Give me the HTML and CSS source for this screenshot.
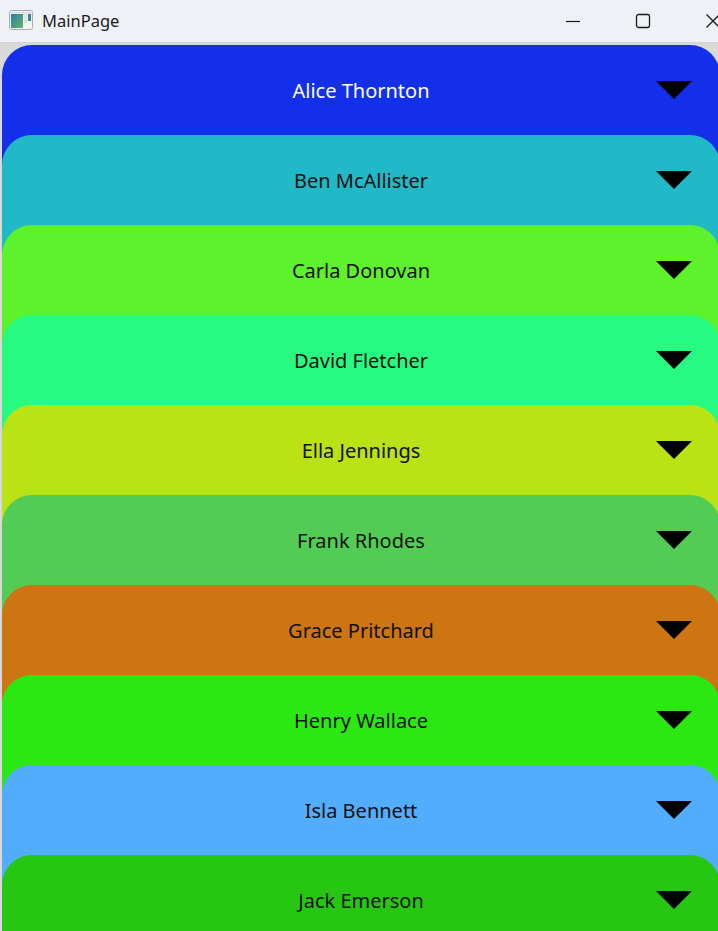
FILE: index.html
```html
<!DOCTYPE html>
<html>
<head>
<meta charset="utf-8">
<link rel="stylesheet" href="styles.css">
</head>
<body>
<div class="window">
  <div class="titlebar">
    <div class="app">
      <svg class="app-icon" width="24" height="20" viewBox="0 0 24 20">
        <defs>
          <linearGradient id="g" x1="0" y1="0" x2="1" y2="1">
            <stop offset="0" stop-color="#2a7fa0"/>
            <stop offset="1" stop-color="#63b36a"/>
          </linearGradient>
        </defs>
        <rect x="0.5" y="0.5" width="23" height="19" rx="2" fill="#f4f4f4" stroke="#a9a9a9"/>
        <rect x="2" y="4" width="12" height="14" fill="url(#g)"/>
        <rect x="15" y="4" width="3" height="9" fill="#e2e2e2"/>
        <rect x="19" y="4" width="3" height="7" fill="#2c8c9c"/>
        <rect x="2" y="2" width="20" height="1.5" fill="#dcdcdc"/>
      </svg>
      <span class="title">MainPage</span>
    </div>
    <div class="controls">
      <div class="ctl"><svg width="16" height="16" viewBox="0 0 16 16"><line x1="1" y1="8.5" x2="15" y2="8.5" stroke="#1a1a1a" stroke-width="1.2"/></svg></div>
      <div class="ctl"><svg width="16" height="16" viewBox="0 0 16 16"><rect x="1.5" y="1.5" width="13" height="13" rx="2" fill="none" stroke="#1a1a1a" stroke-width="1.3"/></svg></div>
      <div class="ctl"><svg width="16" height="16" viewBox="0 0 16 16"><path d="M1.5 1.5 L14.5 14.5 M14.5 1.5 L1.5 14.5" stroke="#1a1a1a" stroke-width="1.3"/></svg></div>
    </div>
  </div>
  <div class="content">
    <div class="card c1 light"><div class="row"><span class="name">Alice Thornton</span><span class="tri"></span></div></div>
    <div class="card c2"><div class="row"><span class="name">Ben McAllister</span><span class="tri"></span></div></div>
    <div class="card c3"><div class="row"><span class="name">Carla Donovan</span><span class="tri"></span></div></div>
    <div class="card c4"><div class="row"><span class="name">David Fletcher</span><span class="tri"></span></div></div>
    <div class="card c5"><div class="row"><span class="name">Ella Jennings</span><span class="tri"></span></div></div>
    <div class="card c6"><div class="row"><span class="name">Frank Rhodes</span><span class="tri"></span></div></div>
    <div class="card c7"><div class="row"><span class="name">Grace Pritchard</span><span class="tri"></span></div></div>
    <div class="card c8"><div class="row"><span class="name">Henry Wallace</span><span class="tri"></span></div></div>
    <div class="card c9"><div class="row"><span class="name">Isla Bennett</span><span class="tri"></span></div></div>
    <div class="card c10"><div class="row"><span class="name">Jack Emerson</span><span class="tri"></span></div></div>
  </div>
</div>
</body>
</html>
```
FILE: styles.css
```css
html, body {
  margin: 0;
  padding: 0;
  overflow: hidden;
  height: 931px;
  background: #d9d9d9;
}
.window {
  width: 748px;
  font-family: "Noto Sans", "Open Sans", sans-serif;
}
.titlebar {
  height: 42px;
  background: #eef2f6;
  border-bottom: 1px solid #d2d4d6;
  display: flex;
  align-items: center;
  justify-content: space-between;
}
.app {
  display: flex;
  align-items: center;
  padding-left: 9px;
  gap: 9px;
}
.app-icon {
  display: block;
  margin-top: -2px;
}
.title {
  font-size: 16.5px;
  color: #1a1a1a;
  margin-top: -2px;
}
.controls {
  display: flex;
  height: 42px;
}
.ctl {
  width: 70px;
  display: flex;
  align-items: center;
  justify-content: center;
}
.content {
  padding: 2px 0 0 2px;
  background: #d9d9d9;
}
.card {
  width: 718px;
  height: 120px;
  margin-bottom: -30px;
  border-radius: 30px 30px 0 0;
  position: relative;
}
.row {
  height: 90px;
  display: grid;
  grid-template-columns: 1fr auto 1fr;
  align-items: center;
}
.name {
  grid-column: 2;
  font-size: 20px;
  color: #111;
  line-height: 1;
  padding-top: 2px;
}
.light .name { color: #ffffff; }
.tri {
  grid-column: 3;
  justify-self: end;
  margin-right: 28px;
  width: 0;
  height: 0;
  border-left: 18.5px solid transparent;
  border-right: 18.5px solid transparent;
  border-top: 18px solid #000;
}
.c1 { background: #142fea; }
.c2 { background: #21b8c7; }
.c3 { background: #5df22b; }
.c4 { background: #26fa80; }
.c5 { background: #bae214; }
.c6 { background: #53cc55; }
.c7 { background: #cc7512; }
.c8 { background: #2ce812; }
.c9 { background: #52adff; }
.c10 { background: #27c612; }
```
